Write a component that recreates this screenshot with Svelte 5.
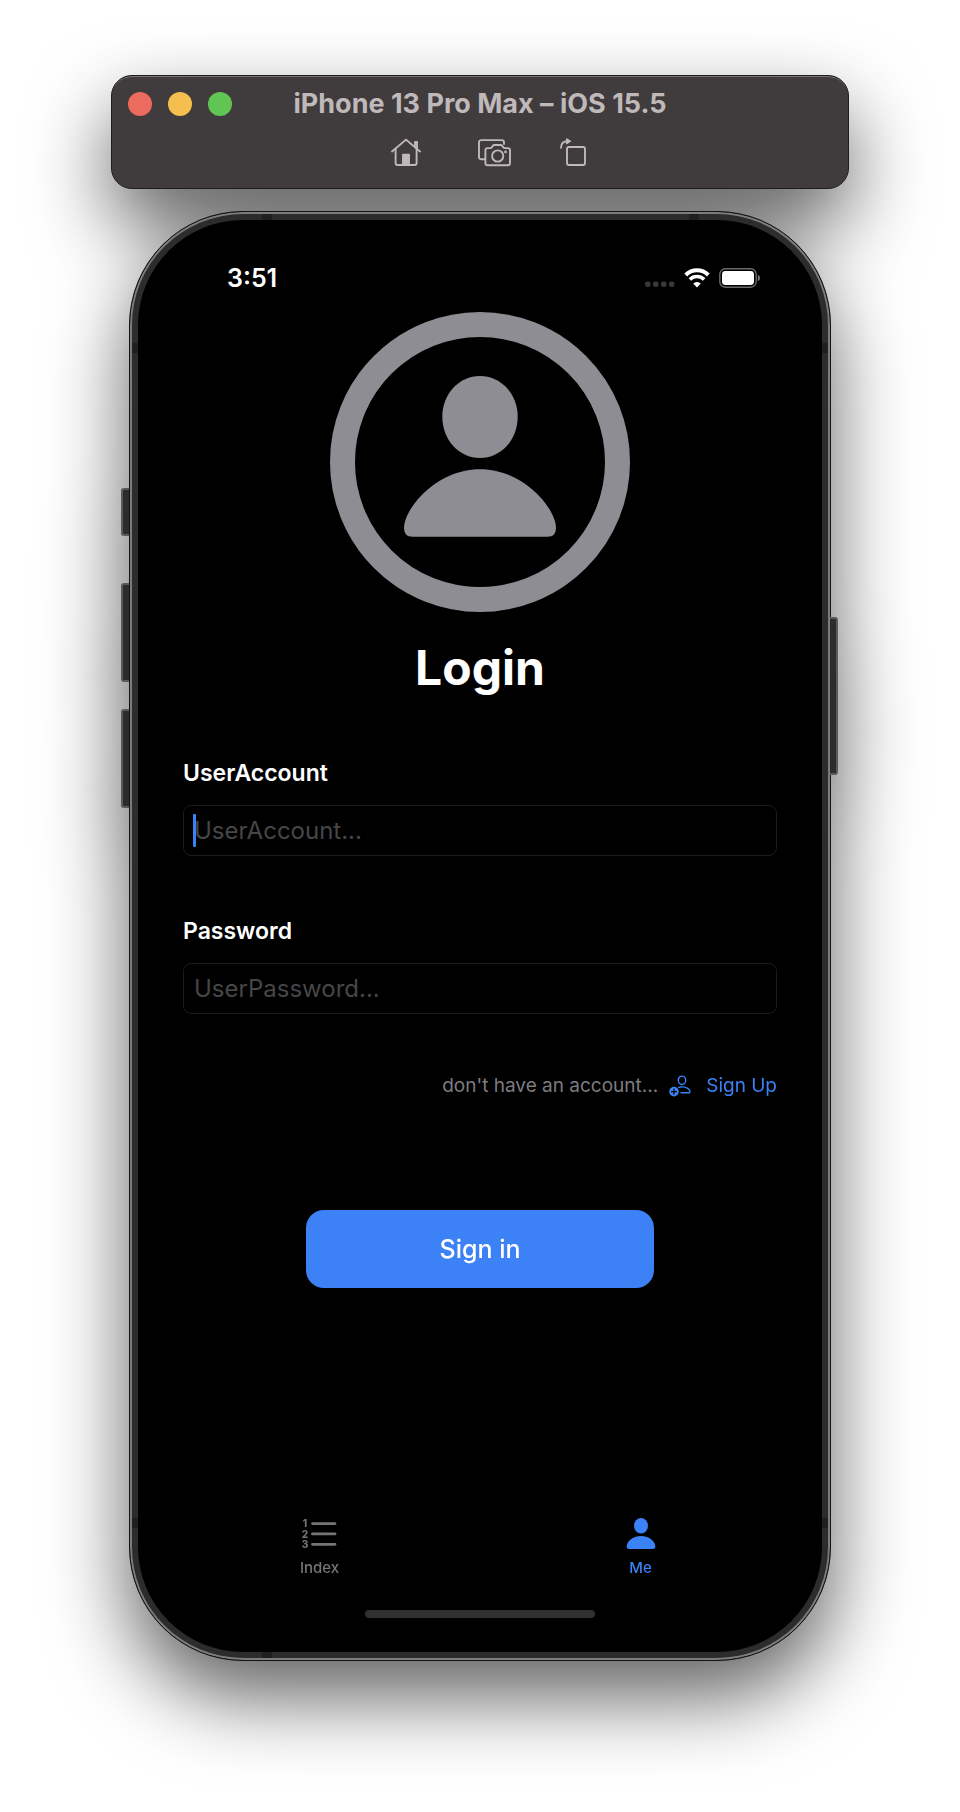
<script>
  let account = $state('');
  let password = $state('');
  let tab = $state('me');
</script>

<main class="desktop">
  <div class="simulator">
    <header class="titlebar">
      <div class="title-row">
        <div class="lights">
          <button class="light red" aria-label="Close"></button>
          <button class="light yellow" aria-label="Minimize"></button>
          <button class="light green" aria-label="Zoom"></button>
        </div>
        <div class="title">iPhone 13 Pro Max – iOS 15.5</div>
      </div>
      <div class="tools">
        <button aria-label="Home">
          <svg width="38" height="30" viewBox="0 0 38 30" fill="none" stroke="#bfb9ba" stroke-width="1.9" stroke-linecap="round" stroke-linejoin="round">
            <path d="M1 13.5 L15 1.6 L29 13.5" />
            <path d="M4.6 11 V25 Q4.6 27 6.6 27 H23.6 Q25.6 27 25.6 25 V11" />
            <path d="M24 8.5 V4 H26 V10.6" />
            <rect x="12" y="16.6" width="6" height="10" fill="#bfb9ba" />
          </svg>
        </button>
        <button aria-label="Screenshot">
          <svg width="33" height="30" viewBox="0 0 33 30" fill="none" stroke="#bfb9ba" stroke-width="1.9" stroke-linecap="round" stroke-linejoin="round">
            <path d="M6.5 21.3 H3.4 Q1 21.3 1 18.9 V4.5 Q1 2.1 3.4 2.1 H23.6 Q26 2.1 26 4.5 V6" />
            <path d="M9.6 10.1 H12.2 Q13.2 10.1 13.8 9.2 L14.6 8 Q15.3 7 16.5 7 H22.5 Q23.7 7 24.4 8 L25.2 9.2 Q25.8 10.1 26.8 10.1 H29.8 Q32 10.1 32 12.3 V25 Q32 27.3 29.8 27.3 H9.6 Q7.4 27.3 7.4 25 V12.3 Q7.4 10.1 9.6 10.1 Z" />
            <circle cx="19.7" cy="18" r="5.6" />
            <circle cx="27.5" cy="13.9" r="1.4" fill="#bfb9ba" stroke="none" />
          </svg>
        </button>
        <button aria-label="Rotate">
          <svg width="26" height="30" viewBox="0 0 26 30" fill="none" stroke="#bfb9ba" stroke-width="1.9" stroke-linecap="round" stroke-linejoin="round">
            <rect x="7" y="9" width="18" height="18" rx="2" />
            <path d="M1 9.8 C1 5.4 3 3.2 7.5 3.2" />
            <path d="M6.8 0.8 L10.8 3.2 L6.8 5.8 Z" fill="#bfb9ba" stroke-width="1" />
          </svg>
        </button>
      </div>
    </header>

    <div class="phone">
      <span class="key mute"></span>
      <span class="key up"></span>
      <span class="key down"></span>
      <span class="key power"></span>
      <span class="band top-left"></span>
      <span class="band top-right"></span>
      <span class="band bottom-left"></span>
      <span class="band left-top"></span>
      <span class="band left-bottom"></span>
      <span class="band right-top"></span>
      <span class="band right-bottom"></span>

      <div class="status">
        <span class="time">3:51</span>
        <span class="signals">
          <svg width="30" height="20" viewBox="0 0 30 20" fill="#373737">
            <rect x="0" y="13.5" width="5.5" height="5.5" rx="2" />
            <rect x="8" y="13.5" width="5.5" height="5.5" rx="2" />
            <rect x="16" y="13.5" width="5.5" height="5.5" rx="2" />
            <rect x="24" y="13.5" width="5.5" height="5.5" rx="2" />
          </svg>
          <svg width="26" height="20" viewBox="0 0 26 20" fill="none" stroke="#fff">
            <path d="M1.7 7 A16 16 0 0 1 24.3 7" stroke-width="4" />
            <path d="M5.9 11.4 A10 10 0 0 1 20.1 11.4" stroke-width="3.6" />
            <path d="M13 19.4 L9.2 15.6 A5.4 5.4 0 0 1 16.8 15.6 Z" fill="#fff" stroke="none" />
          </svg>
          <svg width="42" height="20" viewBox="0 0 42 20">
            <rect x="0.8" y="0.8" width="36.4" height="18.4" rx="5.5" fill="none" stroke="#6a6a6a" stroke-width="1.4" />
            <rect x="3" y="3" width="32" height="14" rx="3.4" fill="#fff" />
            <path d="M38.8 6.8 Q41 7.8 41 10 Q41 12.2 38.8 13.2 Z" fill="#777" />
          </svg>
        </span>
      </div>

      <form class="login" onsubmit={(e) => e.preventDefault()}>
        <svg class="avatar" viewBox="0 0 300 300" fill="#8e8d93">
          <circle cx="150" cy="150" r="137.5" fill="none" stroke="#8e8d93" stroke-width="25" />
          <path d="M150 64 C171 64 187.7 82 187.7 104.5 C187.7 128 171 146 150 146 C129 146 112.3 128 112.3 104.5 C112.3 82 129 64 150 64 Z" />
          <path d="M150 157.3 C194 157.3 226 197 226 216 Q226 224.7 217.5 224.7 H82.5 Q74 224.7 74 216 C74 197 106 157.3 150 157.3 Z" />
        </svg>
        <h1>Login</h1>

        <div class="field">
          <label for="account">UserAccount</label>
          <div class="box">
            <input id="account" type="text" placeholder="UserAccount..." bind:value={account} />
            <span class="caret"></span>
          </div>
        </div>
        <div class="field">
          <label for="password">Password</label>
          <div class="box">
            <input id="password" type="password" placeholder="UserPassword..." bind:value={password} />
          </div>
        </div>

        <p class="signup">
          <span>don't have an account...</span>
          <a href="#signup">
            <svg width="22" height="22" viewBox="0 0 22 22" fill="none" stroke="#3b82f6" stroke-width="1.4">
              <ellipse cx="13" cy="5.3" rx="3.7" ry="4.2" />
              <path d="M9 12.6 Q10.8 11.9 13 11.9 C17.5 11.9 21 14.4 21 16.7 Q21 17.7 20 17.7 H11.5" />
              <circle cx="5" cy="16.6" r="4.8" fill="#3b82f6" stroke="none" />
              <path d="M5 13.7 V19.5 M2.1 16.6 H7.9" stroke="#000" stroke-width="1.3" />
            </svg>
            Sign Up
          </a>
        </p>

        <button class="submit" type="submit">Sign in</button>
      </form>

      <nav class="tabs">
        <button class:active={tab === 'index'} onclick={() => (tab = 'index')}>
          <svg class="list-icon" width="38" height="31" viewBox="0 0 38 31">
            <g stroke="currentColor" stroke-width="2.8" stroke-linecap="round">
              <path d="M11.5 5.6 H34 M11.5 15.9 H34 M11.5 26.3 H34" />
            </g>
            <g class="digits" fill="currentColor" text-anchor="middle">
              <text x="4" y="9">1</text>
              <text x="4" y="20">2</text>
              <text x="4" y="30">3</text>
            </g>
          </svg>
          Index
        </button>
        <button class:active={tab === 'me'} onclick={() => (tab = 'me')}>
          <svg width="30" height="31" viewBox="0 0 30 31" fill="currentColor">
            <ellipse cx="15" cy="7.7" rx="7" ry="7.7" />
            <path d="M15 18 C23.5 18 29.3 23.5 29.3 28.5 Q29.3 31 26.8 31 H3.2 Q0.7 31 0.7 28.5 C0.7 23.5 6.5 18 15 18 Z" />
          </svg>
          Me
        </button>
      </nav>
      <div class="home-indicator"></div>
    </div>
  </div>
</main>

<style>
  :global(body) {
    margin: 0;
    background: #fff;
  }

  .desktop {
    box-sizing: border-box;
    display: flex;
    justify-content: center;
    padding: 75px 16px 150px;
    overflow: hidden;
    font-family: Inter, 'Liberation Sans', sans-serif;
  }

  .simulator {
    display: flex;
    flex-direction: column;
    align-items: center;
    gap: 22px;
    width: 100%;
    max-width: 738px;
    filter: drop-shadow(0 36px 40px rgba(0, 0, 0, 0.62));
  }

  button {
    margin: 0;
    padding: 0;
    border: 0;
    background: none;
    font: inherit;
    cursor: pointer;
  }

  svg {
    display: block;
  }

  .titlebar {
    box-sizing: border-box;
    width: 100%;
    padding: 12px 16px 20px;
    border: 1px solid #1d1d1d;
    border-radius: 21px;
    background: #403b3c;
    box-shadow: inset 0 2px 0 -1px #777675;
  }

  .title-row {
    display: grid;
    grid-template-columns: 1fr auto 1fr;
    align-items: center;
    height: 32px;
  }

  .lights {
    display: flex;
    gap: 16px;
  }

  .light {
    width: 24px;
    height: 24px;
    border-radius: 50%;
  }

  .red {
    background: #ed6a5e;
  }

  .yellow {
    background: #f5bf4f;
  }

  .green {
    background: #61c554;
  }

  .title {
    color: #bfb9ba;
    font-size: 27px;
    font-weight: 700;
    line-height: 32px;
  }

  .tools {
    display: flex;
    justify-content: center;
    gap: 49px;
    padding: 18px 0 0 17px;
  }

  .phone {
    position: relative;
    box-sizing: border-box;
    width: 96%;
    max-width: 702px;
    padding: 46px 8px 42px;
    border: 1px solid #141414;
    border-radius: 114px;
    background: #000;
    box-shadow:
      inset 0 0 0 2px #7c7c7c,
      inset 0 0 0 8px #2c2c2c;
  }

  .key {
    position: absolute;
    box-sizing: border-box;
    width: 8px;
    border: 2px solid #5a5a5a;
    background: #2c2c2c;
  }

  .mute,
  .up,
  .down {
    left: -9px;
    border-right: 0;
    border-radius: 3px 0 0 3px;
  }

  .mute {
    top: 276px;
    height: 48px;
  }

  .up {
    top: 371px;
    height: 99px;
  }

  .down {
    top: 497px;
    height: 99px;
  }

  .power {
    top: 405px;
    right: -8px;
    height: 158px;
    border-left: 0;
    border-radius: 0 3px 3px 0;
  }

  .band {
    position: absolute;
    width: 10px;
    height: 6px;
    background: #1f1f1f;
  }

  .top-left,
  .top-right {
    top: 2px;
  }

  .bottom-left {
    bottom: 2px;
  }

  .top-left,
  .bottom-left {
    left: 132px;
  }

  .top-right {
    right: 131px;
  }

  .left-top,
  .left-bottom,
  .right-top,
  .right-bottom {
    width: 6px;
    height: 10px;
  }

  .left-top,
  .left-bottom {
    left: 2px;
  }

  .right-top,
  .right-bottom {
    right: 2px;
  }

  .left-top,
  .right-top {
    top: 131px;
  }

  .left-bottom,
  .right-bottom {
    bottom: 132px;
  }

  .status {
    display: flex;
    align-items: center;
    justify-content: space-between;
    height: 40px;
    padding: 0 61px 0 89px;
    color: #fff;
  }

  .time {
    font-size: 25px;
    font-weight: 600;
  }

  .signals {
    display: flex;
    gap: 9px;
  }

  .login {
    display: flex;
    flex-direction: column;
    padding: 14px 45px 0;
  }

  .avatar {
    align-self: center;
    width: 300px;
    max-width: 100%;
  }

  h1 {
    margin: 26px 0 60px;
    color: #fff;
    font-size: 48px;
    font-weight: 700;
    line-height: 60px;
    text-align: center;
  }

  .field {
    display: flex;
    flex-direction: column;
    gap: 17px;
    margin-bottom: 60px;
  }

  label {
    align-self: flex-start;
    color: #fff;
    font-size: 23px;
    font-weight: 600;
    line-height: 30px;
  }

  .box {
    position: relative;
  }

  input {
    display: block;
    box-sizing: border-box;
    width: 100%;
    height: 51px;
    padding: 0 10px;
    border: 1px solid #1b1b1c;
    border-radius: 8px;
    outline: none;
    background: #000;
    color: #fff;
    font: inherit;
    font-size: 24px;
  }

  input::placeholder {
    color: #464648;
    opacity: 1;
  }

  .caret {
    position: absolute;
    top: 9px;
    left: 10px;
    width: 3px;
    height: 33px;
    border-radius: 1px;
    background: #3b82f6;
  }

  .signup {
    display: flex;
    justify-content: flex-end;
    gap: 11px;
    margin: 0 0 112px;
    color: #7c7c80;
    font-size: 19px;
    line-height: 24px;
  }

  .signup a {
    display: flex;
    align-items: center;
    gap: 15px;
    color: #3b82f6;
    text-decoration: none;
  }

  .submit {
    align-self: center;
    width: 348px;
    max-width: 100%;
    height: 78px;
    border-radius: 18px;
    background: #3c82f6;
    color: #fff;
    font-size: 25px;
    font-weight: 500;
  }

  .tabs {
    display: grid;
    grid-template-columns: 1fr 1fr;
    padding: 230px 21px 0;
  }

  .tabs button {
    display: flex;
    flex-direction: column;
    align-items: center;
    gap: 10px;
    color: #757575;
    font-size: 15px;
    font-weight: 500;
    line-height: 18px;
  }

  .tabs button.active {
    color: #3b82f6;
  }

  .list-icon {
    overflow: visible;
  }

  .digits {
    font-size: 10px;
    font-weight: 800;
  }

  .home-indicator {
    width: 230px;
    height: 8px;
    margin: 33px auto 0;
    border-radius: 4px;
    background: #303030;
  }
</style>
